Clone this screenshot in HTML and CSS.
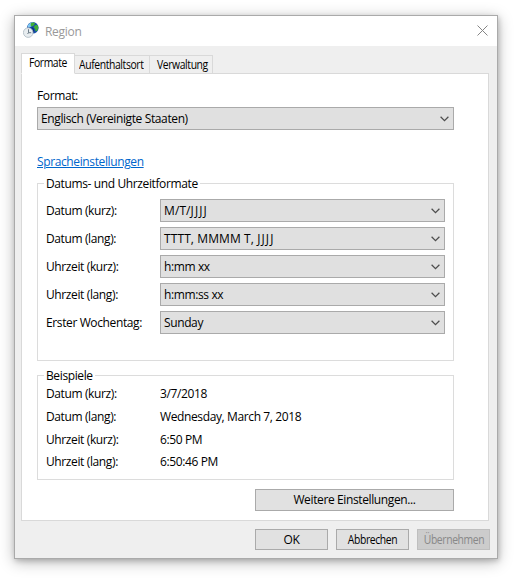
FILE: index.html
```html
<!DOCTYPE html>
<html lang="de">
<head>
<meta charset="utf-8">
<title>Region</title>
<link rel="stylesheet" href="styles.css">
</head>
<body>
<svg class="defs" width="0" height="0"><symbol id="chevron" viewBox="0 0 9 6"><path d="M.6.8 4.5 4.6 8.4.8" fill="none" stroke="#4d4d4d" stroke-width="1.25"/></symbol></svg>
<main class="window">
  <header class="titlebar">
    <svg class="app-icon" viewBox="0 0 16 16">
      <circle cx="9.8" cy="5.8" r="5.8" fill="#164fa8"/>
      <path d="M4.8 3.2Q7.2-.2 10.4.2L9.6 3 8 4.8 5 5.6Z" fill="#7cc6f2"/>
      <path d="M7.8 1.2Q10-.2 12.2 1L10.8 3.6 8.8 4.4 7.6 3.4ZM12 3.2l2.6-.2.8 3-1.4 3-1.5.3-.4-2.6-1.5-1.2Z" fill="#3fae35"/>
      <path d="M8.5 5l2 1 .8 3-.8 2Z" fill="#0a2f80"/>
      <circle cx="5.2" cy="10.6" r="4.8" fill="#e8edf0" stroke="#aab7c0" stroke-width=".8"/>
      <path d="M5.5 7.2v3.5H8.2M5.5 10.7 4.5 12" fill="none" stroke="#60717d" stroke-width=".9"/>
    </svg>
    <h1>Region</h1>
    <svg class="close" viewBox="0 0 11 11"><path d="M.5.5 10.5 10.5M10.5.5.5 10.5" stroke="#858585" stroke-width="1"/></svg>
  </header>
  <nav class="tabs">
    <span class="tab active"><span class="narrow">Formate</span></span>
    <span class="tab second"><span class="narrow">Aufenthaltsort</span></span>
    <span class="tab third"><span class="narrow">Verwaltung</span></span>
  </nav>
  <section class="panel">
    <div class="format-label">Format:</div>
    <div class="select"><span>Englisch (Vereinigte Staaten)</span><svg class="arrow"><use href="#chevron"/></svg></div>
    <div class="link-row"><a class="link">Spracheinstellungen</a></div>
    <div class="group formats">
      <div class="legend">Datums- und Uhrzeitformate</div>
      <div class="row"><span class="label">Datum (kurz):</span><div class="select"><span class="pattern">M/T/<span class="year">JJJJ</span></span><svg class="arrow"><use href="#chevron"/></svg></div></div>
      <div class="row"><span class="label">Datum (lang):</span><div class="select"><span class="pattern">TTTT, MMMM T, <span class="year">JJJJ</span></span><svg class="arrow"><use href="#chevron"/></svg></div></div>
      <div class="row"><span class="label">Uhrzeit (kurz):</span><div class="select"><span>h:mm xx</span><svg class="arrow"><use href="#chevron"/></svg></div></div>
      <div class="row"><span class="label">Uhrzeit (lang):</span><div class="select"><span>h:mm:ss xx</span><svg class="arrow"><use href="#chevron"/></svg></div></div>
      <div class="row"><span class="label">Erster Wochentag:</span><div class="select"><span>Sunday</span><svg class="arrow"><use href="#chevron"/></svg></div></div>
    </div>
    <div class="group examples">
      <div class="legend">Beispiele</div>
      <div class="example"><span class="label">Datum (kurz):</span><span>3/7/2018</span></div>
      <div class="example"><span class="label">Datum (lang):</span><span>Wednesday, March 7, 2018</span></div>
      <div class="example"><span class="label">Uhrzeit (kurz):</span><span>6:50 PM</span></div>
      <div class="example"><span class="label">Uhrzeit (lang):</span><span>6:50:46 PM</span></div>
    </div>
    <div class="button more">Weitere Einstellungen...</div>
  </section>
  <footer class="actions">
    <div class="button">OK</div>
    <div class="button"><span class="narrow">Abbrechen</span></div>
    <div class="button disabled"><span class="narrow">Übernehmen</span></div>
  </footer>
</main>
</body>
</html>
```
FILE: styles.css
```css
* { box-sizing: border-box; }
body { margin: 0; padding: 15px 0 0 14px; height: 582px; overflow: hidden; background: #fff; color: #000; font: 12px/16px "Open Sans", "Noto Sans", sans-serif; letter-spacing: -.38px; }
.defs { position: absolute; }
.window { width: 484px; height: 544px; border: 1px solid #aaa; background: #efefef; box-shadow: 0 3px 14px rgba(0,0,0,.28), 1px 2px 5px rgba(0,0,0,.18); }
.titlebar { height: 30px; padding: 0 9px 0 8px; background: #fff; display: flex; align-items: center; }
.app-icon { width: 16px; height: 16px; display: block; margin-bottom: 2px; }
h1 { margin: 1px auto 0 6px; color: #999; font-size: 12px; font-weight: 400; letter-spacing: -.3px; }
.close { width: 11px; height: 11px; margin-bottom: 1px; }
.tabs { height: 21px; margin: 7px 0 -1px 6px; display: flex; align-items: flex-end; position: relative; }
.tab { height: 19px; border: 1px solid #d9d9d9; background: #efefef; display: flex; align-items: center; justify-content: center; white-space: nowrap; }
.tab.active { width: 54px; height: 21px; background: #fff; border-bottom-color: #fff; padding-bottom: 2px; }
.narrow { display: inline-block; white-space: nowrap; font-size: 12px; letter-spacing: -.45px; transform: scaleX(.865); }
.second { width: 75px; border-left: 0; padding-right: 2px; }
.third { width: 63px; border-left: 0; padding-left: 3px; }
.panel { width: 468px; height: 448px; margin-left: 6px; border: 1px solid #d9d9d9; background: #fff; padding: 14px 34px 0 15px; }
.format-label { height: 19px; }
.select { height: 23px; border: 1px solid #aaa; background: #e0e0e0; padding: 0 4px 0 3px; display: flex; align-items: center; justify-content: space-between; flex: 1; white-space: pre; }
.pattern { letter-spacing: .1px; }
.year { letter-spacing: 1.1px; }
.arrow { width: 9px; height: 6px; }
.link-row { height: 53px; padding-top: 24px; }
.link { color: #0066cc; text-decoration: underline; text-underline-offset: 1px; }
.group { border: 1px solid #dcdcdc; padding: 0 8px; }
.legend { width: fit-content; height: 16px; margin: -8px 0 0 -2px; padding: 0 2px; background: #fff; }
.formats { height: 178px; }
.formats .legend { margin-bottom: 7px; }
.row { display: flex; align-items: center; height: 23px; margin-bottom: 5px; }
.label { width: 114px; white-space: nowrap; }
.examples { margin-top: 14px; height: 105px; }
.example { display: flex; height: 22.7px; align-items: center; }
.examples .legend { margin-bottom: -1px; }
.button { height: 22px; border: 1px solid #aaa; background: #e1e1e1; display: flex; align-items: center; justify-content: center; }
.more { width: 199px; margin: 9px 0 0 auto; }
.actions { display: flex; justify-content: flex-end; gap: 8px; padding: 8px 7px 0 0; }
.actions .button { height: 21px; width: 73px; }
.actions .disabled { background: #ccc; border-color: #bfbfbf; color: #888; }
```
